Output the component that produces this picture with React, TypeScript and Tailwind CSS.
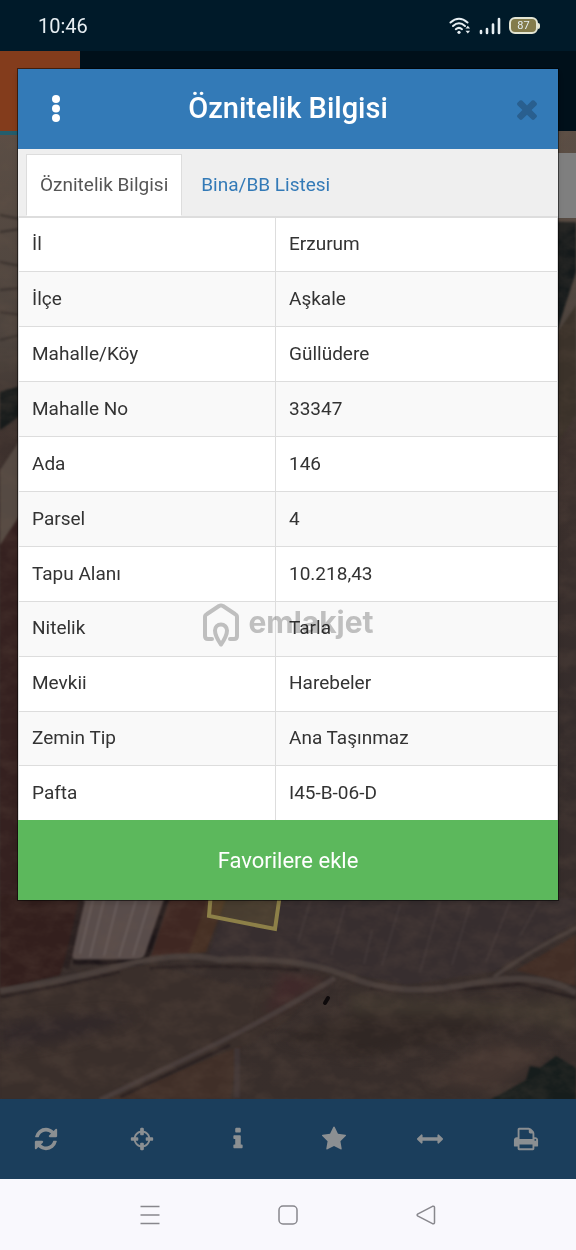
import React, { useState } from 'react';

const rows = [
  { label: 'İl', value: 'Erzurum' },
  { label: 'İlçe', value: 'Aşkale' },
  { label: 'Mahalle/Köy', value: 'Güllüdere' },
  { label: 'Mahalle No', value: '33347' },
  { label: 'Ada', value: '146' },
  { label: 'Parsel', value: '4' },
  { label: 'Tapu Alanı', value: '10.218,43' },
  { label: 'Nitelik', value: 'Tarla' },
  { label: 'Mevkii', value: 'Harebeler' },
  { label: 'Zemin Tip', value: 'Ana Taşınmaz' },
  { label: 'Pafta', value: 'I45-B-06-D' },
];

const tools = [
  {
    name: 'Yenile',
    path: 'M1639 1056q0 5-1 7-64 268-268 434.5t-478 166.5q-146 0-282.5-55t-243.5-157l-129 129q-19 19-45 19t-45-19-19-45v-448q0-26 19-45t45-19h448q26 0 45 19t19 45-19 45l-137 137q71 66 161 102t187 36q134 0 250-65t186-179q11-17 53-117 8-23 30-23h192q13 0 22.5 9.5t9.5 22.5zm25-800v448q0 26-19 45t-45 19h-448q-26 0-45-19t-19-45 19-45l138-138q-148-137-349-137-134 0-250 65t-186 179q-11 17-53 117-8 23-30 23h-199q-13 0-22.5-9.5t-9.5-22.5v-7q65-268 270-434.5t480-166.5q146 0 284 55.5t245 156.5l130-129q19-19 45-19t45 19 19 45z',
  },
  {
    name: 'Konum',
    path: 'M1325 1024h-109q-26 0-45-19t-19-45v-128q0-26 19-45t45-19h109q-32-108-112.5-188.5t-188.5-112.5v109q0 26-19 45t-45 19h-128q-26 0-45-19t-19-45v-109q-108 32-188.5 112.5t-112.5 188.5h109q26 0 45 19t19 45v128q0 26-19 45t-45 19h-109q32 108 112.5 188.5t188.5 112.5v-109q0-26 19-45t45-19h128q26 0 45 19t19 45v109q108-32 188.5-112.5t112.5-188.5zm339-192v128q0 26-19 45t-45 19h-143q-37 161-154.5 278.5t-278.5 154.5v143q0 26-19 45t-45 19h-128q-26 0-45-19t-19-45v-143q-161-37-278.5-154.5t-154.5-278.5h-143q-26 0-45-19t-19-45v-128q0-26 19-45t45-19h143q37-161 154.5-278.5t278.5-154.5v-143q0-26 19-45t45-19h128q26 0 45 19t19 45v143q161 37 278.5 154.5t154.5 278.5h143q26 0 45 19t19 45z',
  },
  {
    name: 'Bilgi',
    path: 'M1216 1344v128q0 26-19 45t-45 19h-512q-26 0-45-19t-19-45v-128q0-26 19-45t45-19h64v-384h-64q-26 0-45-19t-19-45v-128q0-26 19-45t45-19h384q26 0 45 19t19 45v576h64q26 0 45 19t19 45zm-128-1152v192q0 26-19 45t-45 19h-256q-26 0-45-19t-19-45v-192q0-26 19-45t45-19h256q26 0 45 19t19 45z',
  },
  {
    name: 'Favoriler',
    path: 'M1728 647q0 22-26 48l-363 354 86 500q1 7 1 20 0 21-10.5 35.5t-30.5 14.5q-19 0-40-12l-449-236-449 236q-22 12-40 12-21 0-31.5-14.5t-10.5-35.5q0-6 2-20l86-500-364-354q-25-27-25-48 0-37 56-46l502-73 225-455q19-41 49-41t49 41l225 455 502 73q56 9 56 46z',
  },
  {
    name: 'Ölçüm',
    path: 'M1792 896q0 26-19 45l-256 256q-19 19-45 19t-45-19-19-45v-128h-1024v128q0 26-19 45t-45 19-45-19l-256-256q-19-19-19-45t19-45l256-256q19-19 45-19t45 19 19 45v128h1024v-128q0-26 19-45t45-19 45 19l256 256q19 19 19 45z',
  },
  {
    name: 'Yazdır',
    path: 'M448 1536h896v-256h-896v256zm0-640h896v-384h-160q-40 0-68-28t-28-68v-160h-640v640zm1152 64q0-26-19-45t-45-19-45 19-19 45 19 45 45 19 45-19 19-45zm128 0v416q0 13-9.5 22.5t-22.5 9.5h-224v160q0 40-28 68t-68 28h-960q-40 0-68-28t-28-68v-160h-224q-13 0-22.5-9.5t-9.5-22.5v-416q0-79 56.5-135.5t135.5-56.5h64v-544q0-40 28-68t68-28h672q40 0 88 20t76 48l152 152q28 28 48 76t20 88v256h64q79 0 135.5 56.5t56.5 135.5z',
  },
];

const StatusBar: React.FC = () => (
  <div className="flex h-[51px] items-center justify-between bg-[#001a29] pl-[38px] pr-9 text-[#e6eef2]">
    <span className="text-xl">10:46</span>
    <div className="flex items-center gap-2">
      <svg width="22" height="18" viewBox="0 0 22 18" fill="none" stroke="currentColor" strokeWidth="2" strokeLinecap="round">
        <path d="M1.5 5.5Q10 -2 18.5 5.5" />
        <path d="M4 9Q10 3.5 16 9" />
        <path d="M6.8 12.2Q10 9.5 13 12.2" />
        <circle cx="10" cy="15.3" r="1.6" fill="currentColor" stroke="none" />
        <path d="M16.5 11.5l2.3-2.8 2.3 2.8zM16.5 13.7l2.3 2.8 2.3-2.8z" fill="currentColor" stroke="none" />
      </svg>
      <svg width="22" height="18" viewBox="0 0 22 18" stroke="currentColor" strokeWidth="2.6" strokeLinecap="round">
        <path d="M2 14v2M8 12v4M14 7.5V16M20 2v14" />
      </svg>
      <div className="flex items-center">
        <div className="flex h-[17px] w-[29px] items-center justify-center rounded-md border-2 border-[#e3e5d4] bg-[#837b4b] text-[11px] leading-none">
          87
        </div>
        <div className="h-[6px] w-[2px] rounded-r bg-[#e3e5d4]" />
      </div>
    </div>
  </div>
);

const SatelliteMap: React.FC = () => (
  <svg className="absolute inset-0 h-full w-full" viewBox="0 131 576 968" preserveAspectRatio="xMidYMid slice" aria-hidden="true">
    <defs>
      <linearGradient id="ground" x1="0" y1="0" x2="0" y2="1">
        <stop offset="0" stopColor="#5b4e45" />
        <stop offset="0.22" stopColor="#4c433d" />
        <stop offset="0.32" stopColor="#3d312d" />
        <stop offset="0.6" stopColor="#352c2b" />
        <stop offset="1" stopColor="#382e2b" />
      </linearGradient>
      <filter id="grain" x="0" y="0" width="100%" height="100%" colorInterpolationFilters="sRGB">
        <feTurbulence type="fractalNoise" baseFrequency="0.04 0.06" numOctaves="4" seed="7" />
        <feColorMatrix type="matrix" values="0 0 0 0 0.42  0 0 0 0 0.34  0 0 0 0 0.29  2.4 0 0 0 -0.9" />
      </filter>
      <filter id="soft" colorInterpolationFilters="sRGB">
        <feGaussianBlur stdDeviation="1.2" />
      </filter>
      <filter id="haze" colorInterpolationFilters="sRGB">
        <feGaussianBlur stdDeviation="6" />
      </filter>
    </defs>
    <rect y="131" width="576" height="968" fill="url(#ground)" />
    <g filter="url(#soft)">
      {/* fields left and right of the dialog */}
      <path d="M0 215l20 4M0 232l20-3M0 262l20 4M0 290l20-2M0 312l20 3M0 340l20-5" stroke="#3a322e" strokeWidth="2" />
      <path d="M0 392l20-6v30l-20 14z" fill="#171b1b" />
      <path d="M0 470l20-30v90l-20 30z" fill="#554a43" />
      <path d="M0 545l20-30v390H0z" fill="#352120" />
      <path d="M556 222h20v50l-20 62z" fill="#151a1b" />
      <path d="M556 335l20-30v110l-20 30z" fill="#3b322a" />
      {/* ploughed fields above the track */}
      <path d="M0 895h85L60 975l-60 14z" fill="#331f1d" />
      <path d="M84 895h83l-18 58q-3 9-14 8l-58-1q-6-1-4-8z" fill="#594d4b" />
      <path d="M93 900L80 954M104 900L90 957M118 900l-14 56M136 900l-17 57M150 900l-17 56" stroke="#6d6160" strokeWidth="1.5" />
      <path d="M167 898l-20 58q-3 7-14 6l-60 0" fill="none" stroke="#1d1618" strokeWidth="5" />
      <path d="M82 900L66 968" stroke="#2a2020" strokeWidth="6" />
      <path d="M170 898h42l-24 58-38 4z" fill="#3f2722" />
      <path d="M208 898h18l-20 54-18 3z" fill="#463024" />
      <path d="M228 898h348v25l-80 48-90 14-120-24-78-4z" fill="#372e2f" />
      <path d="M310 902l-12 40M345 905l-14 50M372 930l-8 34M400 905l-18 60M440 902l-20 70M470 905l-18 60M510 902l-24 60M540 900l-20 36" stroke="#443a3a" strokeWidth="1.5" />
      <path d="M252 990l78-18-42 48-130 80H0V992l150-28z" fill="#3a2f2b" />
      <path d="M240 1046l-130 53h120z" fill="#402f28" />
      <path d="M576 935l-60 35 60 16z" fill="#422e26" />
    </g>
    <g filter="url(#haze)">
      <path d="M0 1024q60-8 110-10l30 2-60 22-80 12z" fill="#312829" />
      <path d="M280 973l45 8-60 36z" fill="#40292a" />
      <path d="M380 1005q70-15 130 10l-40 22-110 20-80-20z" fill="#302724" />
      <path d="M350 992q120 18 226 6v36q-60-22-226-20z" fill="#40372f" />
      <path d="M430 1080l60-38 60 10-60 40z" fill="#433530" />
    </g>
    <g filter="url(#soft)">
      <path d="M490 1100l36-20 4-14 10 2 16-12 20 12v34z" fill="#161d1c" />
      {/* tracks */}
      <path d="M0 997Q60 986 120 972M150 968Q220 964 300 970M370 988Q450 993 520 984L576 998" fill="none" stroke="#2a2121" strokeWidth="3" />
      <path d="M120 1097L230 1045" stroke="#2a2121" strokeWidth="3" />
      <path d="M0 991Q60 982 120 966T220 960Q300 956 350 977T470 984T576 993" fill="none" stroke="#483e3b" strokeWidth="6" />
      <path d="M100 1100L220 1042Q280 1012 335 978" fill="none" stroke="#483d3b" strokeWidth="5" />
      <path d="M494 977Q530 950 580 926" fill="none" stroke="#483e3b" strokeWidth="4" />
      <path d="M237 1048v50" stroke="#3f3535" strokeWidth="6" />
    </g>
    <rect y="131" width="576" height="968" filter="url(#grain)" opacity="0.2" />
    <path d="M325 1003l3-5" stroke="#0e0a0b" strokeWidth="4" strokeLinecap="round" />
    {/* parcel outline */}
    <path d="M212 880l-3 36 66 13 7-49" fill="#7a6a34" fillOpacity="0.25" stroke="#8d8048" strokeWidth="4" />
  </svg>
);

const Watermark: React.FC = () => (
  <div className="pointer-events-none absolute inset-x-0 top-[533px] flex items-start justify-center gap-2 text-[#c4c4c4] mix-blend-multiply">
    <svg width="38" height="46" viewBox="0 0 38 46" fill="none" stroke="currentColor" strokeWidth="4" strokeLinejoin="round">
      <path d="M10 37H6q-3 0-3-3V15q0-2 2-3L17 4q2-1 4 0l12 8q2 1 2 3v19q0 3-3 3h-4" strokeLinecap="round" />
      <path d="M19 42.5Q13 34 13 28.500a6 6 0 0 1 12 0q0 5.500-6 14z" />
    </svg>
    <span className="font-[Inter] text-[30px] font-bold leading-10">emlakjet</span>
  </div>
);

const App: React.FC = () => {
  const [tab, setTab] = useState('oznitelik');

  const tabClass = (name: string) =>
    `border px-[13px] text-[19px] leading-[60px] ${
      tab === name ? 'border-[#ddd] border-b-white bg-white text-[#555]' : 'border-transparent text-[#337ab7]'
    }`;

  return (
    <div className="relative flex min-h-screen flex-col bg-[#00101a] font-[Roboto,sans-serif]">
      <StatusBar />

      {/* App header behind the dialog */}
      <header className="flex h-20 bg-[#00101a]">
        <div className="w-20 bg-[#833c1c]" />
      </header>

      <main className="relative flex flex-1 flex-col overflow-hidden">
        <SatelliteMap />
        <div className="relative h-1 w-20 bg-[#235d6c]" />
        <div className="relative mt-[18px] ml-auto h-[65px] w-20 bg-[#7f7f7f]" />
      </main>

      {/* Map tools */}
      <nav className="grid h-20 grid-cols-6 bg-[#1b3e5c] text-[#8b8f92]">
        {tools.map((tool) => (
          <button key={tool.name} type="button" aria-label={tool.name} className="flex items-center justify-center pr-1">
            <svg width="26" height="26" viewBox="0 0 1792 1792" fill="currentColor">
              <path d={tool.path} />
            </svg>
          </button>
        ))}
      </nav>

      {/* Android navigation */}
      <div className="flex h-[71px] items-center justify-center gap-[118px] bg-[#f9f8fd] text-[#88878d]">
        <button type="button" aria-label="Son uygulamalar">
          <svg width="20" height="20" viewBox="0 0 20 20" stroke="currentColor" strokeWidth="1.5">
            <path d="M0.500 1.500h19M0.500 10h19M0.500 18.500h19" />
          </svg>
        </button>
        <button type="button" aria-label="Ana ekran">
          <svg width="20" height="20" viewBox="0 0 20 20" fill="none" stroke="currentColor" strokeWidth="1.5">
            <rect x="1" y="1" width="18" height="18" rx="4" />
          </svg>
        </button>
        <button type="button" aria-label="Geri">
          <svg width="20" height="20" viewBox="0 0 20 20" fill="none" stroke="currentColor" strokeWidth="1.5" strokeLinejoin="round">
            <path d="M2 8.800L16.500 1.300Q18.500 0.800 18.500 2.500v15q0 1.700-2 1.200L2 11.200q-1.800-1.200 0-2.400z" />
          </svg>
        </button>
      </div>

      <div className="absolute inset-x-0 top-0 px-[17px] pt-17">
        <section role="dialog" aria-labelledby="dialog-title" className="relative border border-black/50 bg-white bg-clip-padding shadow-md">
          <div className="grid h-20 grid-cols-[76px_1fr_76px] items-center bg-[#337ab7] text-white">
            <button type="button" aria-label="Menü" className="flex justify-center">
              <svg width="8" height="28" viewBox="0 0 8 28" fill="currentColor">
                <circle cx="4" cy="4" r="4" />
                <circle cx="4" cy="13.500" r="4" />
                <circle cx="4" cy="23" r="4" />
              </svg>
            </button>
            <h1 id="dialog-title" className="text-center text-[29px] font-medium">Öznitelik Bilgisi</h1>
            <button type="button" aria-label="Kapat" className="flex justify-end pr-4 text-[#295f8f]">
              <svg width="30" height="30" viewBox="0 0 1792 1792" fill="currentColor">
                <path d="M1490 1322q0 40-28 68l-136 136q-28 28-68 28t-68-28l-294-294-294 294q-28 28-68 28t-68-28l-136-136q-28-28-28-68t28-68l294-294-294-294q-28-28-28-68t28-68l136-136q28-28 68-28t68 28l294 294 294-294q28-28 68-28t68 28l136 136q28 28 28 68t-28 68l-294 294 294 294q28 28 28 68z" />
              </svg>
            </button>
          </div>

          <div role="tablist" className="flex gap-[5px] border-b-2 border-[#ddd] bg-[#efefef] px-2 pt-[5px]">
            <button type="button" role="tab" aria-selected={tab === 'oznitelik'} onClick={() => setTab('oznitelik')} className={tabClass('oznitelik')}>
              Öznitelik Bilgisi
            </button>
            <button type="button" role="tab" aria-selected={tab === 'bina'} onClick={() => setTab('bina')} className={tabClass('bina')}>
              Bina/BB Listesi
            </button>
          </div>

          <table className="h-[602px] w-full table-fixed text-left text-[19px] text-[#333]">
            <tbody>
              {rows.map((row) => (
                <tr key={row.label} className="border-b border-[#ddd] last:border-b-0 even:bg-[#f9f9f9]">
                  <th scope="row" className="w-[257px] border-x border-[#ddd] px-[13px] font-normal">{row.label}</th>
                  <td className="border-x border-[#ddd] px-[13px]">{row.value}</td>
                </tr>
              ))}
            </tbody>
          </table>

          <button type="button" className="block h-20 w-full bg-[#5cb85c] text-[22px] text-white">
            Favorilere ekle
          </button>

          <Watermark />
        </section>
      </div>
    </div>
  );
};

export default App;
